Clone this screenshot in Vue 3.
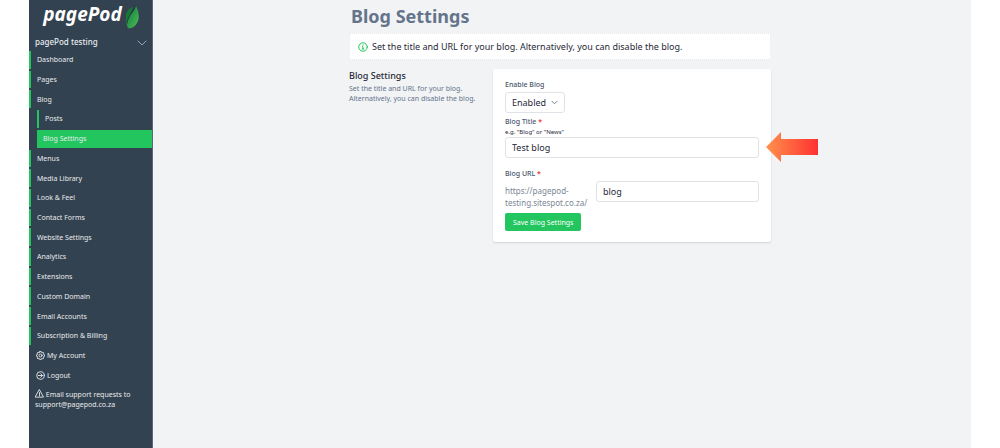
<script setup>
import { ref } from 'vue'

const before = ['Dashboard', 'Pages', 'Blog']
const after = [
  'Menus', 'Media Library', 'Look & Feel', 'Contact Forms', 'Website Settings', 'Analytics',
  'Extensions', 'Custom Domain', 'Email Accounts', 'Subscription & Billing',
]
const enabled = ref('Enabled')
const title = ref('Test blog')
const slug = ref('blog')
</script>

<template>
  <div class="page">
    <aside class="sidebar">
      <a class="logo" href="#">
        <span>pagePod</span>
        <svg viewBox="0 0 14 24" aria-hidden="true">
          <defs>
            <linearGradient id="leaf" x1="0" y1="0" x2="1" y2="1">
              <stop offset="0" stop-color="#137a35" />
              <stop offset="0.5" stop-color="#2b9c49" />
              <stop offset="1" stop-color="#55bd58" />
            </linearGradient>
          </defs>
          <path d="M8 2C3 4 0 8 1 13c0 3 0 5 1 7C3 13 6 8 8 2Z" fill="#137a35" />
          <path d="M11 1c3 6 4 12 1 17-2 4-6 6-9 5C0 18 2 13 6 9c3-3 4-5 5-8Z" fill="url(#leaf)" />
          <path d="M10 1C9 7 3 10 2 18" fill="none" stroke="#28323c" stroke-width="1" />
        </svg>
      </a>
      <button class="site" type="button">
        <span>pagePod testing</span>
        <svg viewBox="0 0 10 6" aria-hidden="true"><path d="M1 1l4 4 4-4" /></svg>
      </button>
      <nav class="menu">
        <a v-for="item in before" :key="item" class="item" href="#">{{ item }}</a>
        <a class="item sub" href="#">Posts</a>
        <a class="item sub active" href="#">Blog Settings</a>
        <a v-for="item in after" :key="item" class="item" href="#">{{ item }}</a>
        <a class="tool" href="#">
          <svg viewBox="0 0 20 20" aria-hidden="true">
            <path d="M8.500 1h3l.6 2 1.500.6 1.900-1 2 2-1 1.900.6 1.500 2 .6v3l-2 .6-.6 1.500 1 1.900-2 2-1.900-1-1.500.6-.6 2h-3l-.6-2-1.500-.6-1.900 1-2-2 1-1.900-.6-1.500-2-.6v-3l2-.6.6-1.500-1-1.900 2-2 1.900 1 1.500-.6Z" />
            <circle cx="10" cy="10" r="3.500" />
          </svg>
          <span>My Account</span>
        </a>
        <a class="tool" href="#">
          <svg viewBox="0 0 20 20" aria-hidden="true">
            <circle cx="10" cy="10" r="8.500" /><path d="M5 10h9M10.500 6l4 4-4 4" />
          </svg>
          <span>Logout</span>
        </a>
      </nav>
      <p class="support">
        <svg viewBox="0 0 20 20" aria-hidden="true">
          <path d="M10 2L19 18H1Z" /><path d="M10 8v5M10 14.500v1" />
        </svg>
        Email support requests to support@pagepod.co.za
      </p>
    </aside>

    <main class="main">
      <div class="content">
        <h1>Blog Settings</h1>
        <div class="notice">
          <svg viewBox="0 0 20 20" aria-hidden="true">
            <circle cx="10" cy="10" r="8.500" /><path d="M8.500 9.500H10V14M8.500 14h3M10 5.500v1" />
          </svg>
          <span>Set the title and URL for your blog. Alternatively, you can disable the blog.</span>
        </div>
        <section class="settings">
          <div class="intro">
            <h2>Blog Settings</h2>
            <p>Set the title and URL for your blog. Alternatively, you can disable the blog.</p>
          </div>
          <form class="card" @submit.prevent>
            <label class="label" for="enable">Enable Blog</label>
            <div class="select">
              <select id="enable" v-model="enabled">
                <option>Enabled</option>
                <option>Disabled</option>
              </select>
              <svg viewBox="0 0 8 5" aria-hidden="true"><path d="M1 1l3 3 3-3" /></svg>
            </div>
            <label class="label" for="title">Blog Title <b>*</b></label>
            <small id="hint">e.g. "Blog" or "News"</small>
            <div class="field">
              <input id="title" v-model="title" type="text" aria-describedby="hint" required>
              <svg class="arrow" viewBox="0 0 54 32" aria-hidden="true">
                <defs>
                  <linearGradient id="arrow">
                    <stop offset="0" stop-color="#ff914d" />
                    <stop offset="1" stop-color="#ff3131" />
                  </linearGradient>
                </defs>
                <path d="M1 16L16 1v7h37v16H16v7Z" fill="url(#arrow)" />
              </svg>
            </div>
            <label class="label url-label" for="slug">Blog URL <b>*</b></label>
            <div class="url">
              <span>https://pagepod-testing.sitespot.co.za/</span>
              <input id="slug" v-model="slug" type="text" required>
            </div>
            <button class="save" type="submit">Save Blog Settings</button>
          </form>
        </section>
      </div>
    </main>
  </div>
</template>

<style>
body {
  margin: 0;
  background: #fff;
}
</style>

<style scoped>
.page {
  display: flex;
  min-height: 100vh;
  padding: 0 29px;
  box-sizing: border-box;
  font-family: "Noto Sans", sans-serif;
  font-size: 7px;
  color: #1f2937;
}
.page * {
  box-sizing: border-box;
}
svg {
  fill: none;
  stroke: currentColor;
  stroke-linecap: round;
  stroke-linejoin: round;
}
a {
  color: inherit;
  text-decoration: none;
}
button,
input,
select {
  font: inherit;
  color: inherit;
}
.sidebar {
  flex: 0 0 124px;
  border: solid #5b6775;
  border-width: 0 1px 0 0;
  background: #334250;
  color: #e8ebee;
}
.logo {
  display: flex;
  justify-content: center;
  gap: 3px;
  height: 32px;
  padding-left: 1px;
  color: #fff;
  font-size: 19px;
  font-style: italic;
  font-weight: 700;
  line-height: 28px;
}
.logo svg {
  width: 14px;
  height: 24px;
  margin-top: 5px;
  stroke: none;
}
.site {
  display: flex;
  justify-content: space-between;
  align-items: center;
  width: 100%;
  height: 18px;
  padding: 0 5px 0 6px;
  border: 0;
  background: none;
  font-size: 8px;
  font-weight: 500;
}
.site svg {
  width: 10px;
  height: 6px;
  margin-top: 3px;
  color: #8fa3bd;
}
.menu {
  display: grid;
  grid-auto-rows: 1fr;
  gap: 2px;
  height: 333px;
  margin-top: 1px;
}
.item {
  display: flex;
  align-items: center;
  padding-left: 6px;
  border-left: 2px solid #22c55e;
}
.sub {
  margin-left: 8px;
}
.active {
  padding-left: 4px;
  background: #22c55e;
}
.tool {
  display: flex;
  align-items: center;
  gap: 2px;
  padding-left: 7px;
}
.tool svg,
.support svg {
  width: 9px;
  height: 9px;
  stroke-width: 2;
}
.support {
  margin: 5px 5px 0 6px;
  line-height: 10px;
}
.support svg {
  vertical-align: -1px;
}
.main {
  flex: 1;
  padding-right: 4px;
  background: #f2f3f5;
}
.content {
  max-width: 422px;
  margin: 0 auto;
}
h1 {
  margin: 0;
  padding: 4px 2px 5px;
  color: #64748b;
  font-size: 18px;
  font-weight: 700;
  line-height: 24px;
}
.notice {
  display: flex;
  align-items: center;
  gap: 4px;
  min-height: 27px;
  padding: 0 8px;
  border: 1px dotted #e3e6ea;
  background: #fff;
  font-size: 9px;
}
.notice svg {
  width: 10px;
  height: 10px;
  color: #22c55e;
  stroke-width: 2;
}
.settings {
  display: grid;
  grid-template-columns: 1fr 2fr;
  gap: 5px;
  margin-top: 9px;
}
h2 {
  margin: 1px 0 2px;
  font-size: 9px;
  font-weight: 500;
  line-height: 12px;
}
.intro p {
  margin: 0;
  color: #64748b;
  font-size: 7px;
  line-height: 10px;
}
.card {
  display: flex;
  flex-direction: column;
  align-items: flex-start;
  padding: 11px 12px;
  border-radius: 2px;
  background: #fff;
  box-shadow: 0 1px 2px #0002;
}
.label {
  color: #475569;
  font-weight: 500;
  line-height: 10px;
}
.label b {
  color: #ef4444;
}
.select {
  display: grid;
  align-items: center;
  margin: 2px 0 4px;
}
.select > * {
  grid-area: 1 / 1;
}
.select svg {
  justify-self: end;
  width: 7px;
  height: 5px;
  margin-right: 7px;
  color: #6b7280;
  pointer-events: none;
}
select,
input {
  height: 21px;
  padding: 0 6px;
  border: 1px solid #dfe3e8;
  border-radius: 3px;
  background: #fff;
  font-size: 9px;
}
select {
  width: 60px;
  appearance: none;
}
input {
  display: block;
  width: 100%;
  min-width: 0;
}
small {
  font-size: 6px;
  font-weight: 400;
  line-height: 10px;
}
.field {
  position: relative;
  width: 100%;
}
.arrow {
  position: absolute;
  top: -6px;
  left: calc(100% + 6px);
  width: 54px;
  height: 32px;
  stroke: none;
}
.url-label {
  margin-top: 11px;
}
.url {
  display: grid;
  grid-template-columns: 81px 1fr;
  gap: 10px;
  width: 100%;
  margin: 2px 0 4px;
}
.url span {
  padding-top: 4px;
  color: #7b8594;
  font-size: 8px;
  line-height: 12px;
}
.save {
  height: 18px;
  padding: 0 8px;
  border: 0;
  border-radius: 2px;
  background: #22c55e;
  color: #fff;
}
</style>
